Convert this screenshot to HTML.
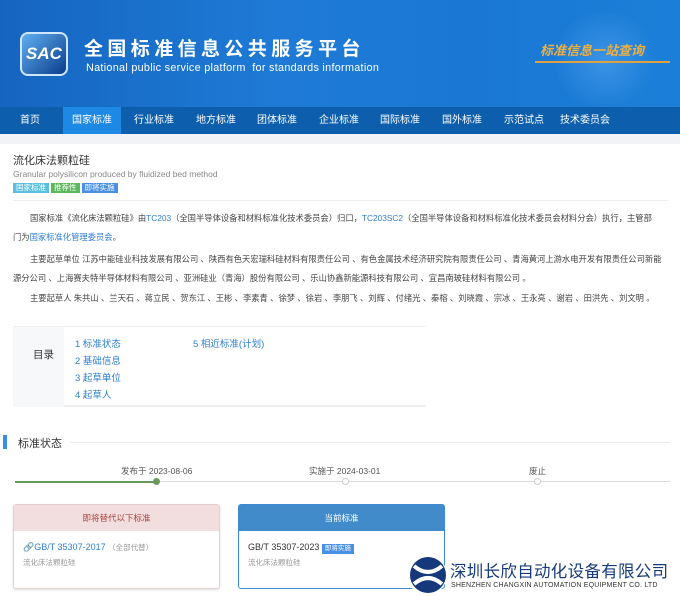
<!DOCTYPE html>
<html><head><meta charset="utf-8"><style>
*{margin:0;padding:0;box-sizing:border-box}
body{width:680px;height:596px;overflow:hidden;background:#fff;font-family:"Liberation Sans","Noto Sans CJK SC",sans-serif;font-size:9px;color:#333;position:relative}
.hd{position:absolute;left:0;top:0;width:680px;height:107px;background:linear-gradient(90deg,#1565c0 0%,#1e7ad6 40%,#1a78d4 70%,#1b7fd8 100%)}
.nav{position:absolute;left:0;top:107px;width:680px;height:27px;background:#0d5fae}
.nav span{position:absolute;top:0;height:27px;line-height:27px;color:#fff;font-size:10px}
.strip{position:absolute;left:0;top:134px;width:680px;height:10px;background:#f1f3f6}
.lk{color:#2f7fd0}
.l{position:absolute;white-space:nowrap;font-size:8.3px;color:#444;line-height:12px}
.bd{display:inline-block;color:#fff;font-size:7.5px;padding:0 3px;height:10px;line-height:10px;margin-right:2px}
</style></head><body>
<div class="hd">
 <div style="position:absolute;left:20px;top:32px;width:48px;height:44px;border-radius:8px;background:linear-gradient(135deg,#5fb0f0,#0a3c8c);border:2px solid #cfe6fb"></div>
 <div style="position:absolute;left:21px;top:44px;width:46px;color:#fff;font:italic bold 17px 'Liberation Sans',sans-serif;text-align:center">SAC</div>
 <div style="position:absolute;left:84px;top:34px;color:#fff;font-size:19px;letter-spacing:4.4px;font-weight:bold">全国标准信息公共服务平台</div>
 <div style="position:absolute;left:86px;top:62px;color:#fff;font-size:10.8px;letter-spacing:.3px">National public service platform&nbsp; for standards information</div>
 <div style="position:absolute;left:550px;top:12px;width:110px;height:95px;border-radius:50%;background:radial-gradient(circle,rgba(120,190,255,.35),rgba(30,120,210,0) 70%)"></div>
 <div style="position:absolute;left:540px;top:40px;color:#f0b040;font-size:13px;font-style:italic;font-weight:bold">标准信息一站查询</div>
 <div style="position:absolute;left:535px;top:61px;width:135px;height:2px;background:#e0a040"></div>
</div>
<div class="nav">
 <div style="position:absolute;left:63px;top:0;width:58px;height:27px;background:#1e88e5"></div>
 <span style="left:20px">首页</span><span style="left:72px">国家标准</span><span style="left:134px">行业标准</span><span style="left:196px">地方标准</span><span style="left:257px">团体标准</span><span style="left:319px">企业标准</span><span style="left:380px">国际标准</span><span style="left:442px">国外标准</span><span style="left:504px">示范试点</span><span style="left:560px">技术委员会</span>
</div>
<div class="strip"></div>
<div style="position:absolute;left:13px;top:152px;font-size:11px;color:#333">流化床法颗粒硅</div>
<div style="position:absolute;left:13px;top:169px;font-size:8.5px;color:#888">Granular polysilicon produced by fluidized bed method</div>
<div style="position:absolute;left:13px;top:182px"><span class="bd" style="background:#5bc0de">国家标准</span><span class="bd" style="background:#5cb85c">推荐性</span><span class="bd" style="background:#4a90e2">即将实施</span></div>
<div style="position:absolute;left:13px;top:200px;width:655px;height:1px;background:#eee"></div>
<div class="l" style="left:30px;top:212px">国家标准《流化床法颗粒硅》由<span class="lk">TC203</span>（全国半导体设备和材料标准化技术委员会）归口，<span class="lk">TC203SC2</span>（全国半导体设备和材料标准化技术委员会材料分会）执行，主管部</div>
<div class="l" style="left:13px;top:231px">门为<span class="lk">国家标准化管理委员会</span>。</div>
<div class="l" style="left:30px;top:253px">主要起草单位 江苏中能硅业科技发展有限公司 、陕西有色天宏瑞科硅材料有限责任公司 、有色金属技术经济研究院有限责任公司 、青海黄河上游水电开发有限责任公司新能</div>
<div class="l" style="left:13px;top:272px">源分公司 、上海赛夫特半导体材料有限公司 、亚洲硅业（青海）股份有限公司 、乐山协鑫新能源科技有限公司 、宜昌南玻硅材料有限公司 。</div>
<div class="l" style="left:30px;top:292px">主要起草人 朱共山 、兰天石 、蒋立民 、贺东江 、王彬 、李素青 、徐梦 、徐岩 、李朋飞 、刘辉 、付绪光 、秦榕 、刘晓霞 、宗冰 、王永亮 、谢岩 、田洪先 、刘文明 。</div>
<div style="position:absolute;left:13px;top:326px;width:413px;height:81px;border-top:1px solid #eee;border-bottom:2px solid #eee"></div>
<div style="position:absolute;left:13px;top:327px;width:51px;height:80px;background:#f7f8fa"></div>
<div style="position:absolute;left:33px;top:347px;font-size:10.5px">目录</div>
<div style="position:absolute;left:75px;top:336px;line-height:17px;font-size:9.5px;color:#2f7fd0">1 标准状态<br>2 基础信息<br>3 起草单位<br>4 起草人</div>
<div style="position:absolute;left:193px;top:336px;line-height:17px;font-size:9.5px;color:#2f7fd0">5 相近标准(计划)</div>
<div style="position:absolute;left:3px;top:435px;width:4px;height:14px;background:#3a8ee6"></div>
<div style="position:absolute;left:18px;top:435px;font-size:11px;color:#333">标准状态</div>
<div style="position:absolute;left:70px;top:442px;width:600px;height:1px;background:#eee"></div>
<div style="position:absolute;left:121px;top:465px;font-size:8.5px;color:#555">发布于 2023-08-06</div>
<div style="position:absolute;left:309px;top:465px;font-size:8.5px;color:#555">实施于 2024-03-01</div>
<div style="position:absolute;left:529px;top:465px;font-size:8.5px;color:#555">废止</div>
<div style="position:absolute;left:15px;top:481px;width:655px;height:1px;background:#ddd"></div>
<div style="position:absolute;left:15px;top:481px;width:142px;height:2px;background:#6a9a5a"></div>
<div style="position:absolute;left:153px;top:478px;width:7px;height:7px;border-radius:50%;background:#6a9a5a"></div>
<div style="position:absolute;left:342px;top:478px;width:7px;height:7px;border-radius:50%;background:#fff;border:1px solid #ccc"></div>
<div style="position:absolute;left:534px;top:478px;width:7px;height:7px;border-radius:50%;background:#fff;border:1px solid #ccc"></div>
<div style="position:absolute;left:13px;top:504px;width:207px;height:85px;border:1px solid #e8d0d0;border-radius:3px;box-shadow:0 1px 2px #ddd">
 <div style="height:26px;line-height:26px;background:#f2dede;color:#a94442;text-align:center;font-size:8.5px">即将替代以下标准</div>
 <div style="position:absolute;left:9px;top:37px;font-size:9px;color:#2f7fd0">🔗GB/T 35307-2017 <span style="color:#999;font-size:7.5px">（全部代替）</span></div>
 <div style="position:absolute;left:9px;top:52px;font-size:7.5px;color:#999">流化床法颗粒硅</div>
</div>
<div style="position:absolute;left:238px;top:504px;width:207px;height:85px;border:1px solid #3d8bd0;border-radius:3px">
 <div style="height:26px;line-height:26px;background:#428bca;color:#fff;text-align:center;font-size:8.5px">当前标准</div>
 <div style="position:absolute;left:9px;top:37px;font-size:9px;color:#333">GB/T 35307-2023 <span class="bd" style="background:#4a90e2;font-size:6.5px">即将实施</span></div>
 <div style="position:absolute;left:9px;top:52px;font-size:7.5px;color:#999">流化床法颗粒硅</div>
</div>
<div style="position:absolute;left:407px;top:555px;width:40px;height:40px;border-radius:50%;background:#fff"></div>
<svg style="position:absolute;left:409px;top:556px" width="38" height="38" viewBox="0 0 38 38"><circle cx="19" cy="19" r="18" fill="#14387a"/><path d="M5 10 Q19 22 33 10 M5 28 Q19 16 33 28" stroke="#fff" stroke-width="4" fill="none"/></svg>
<div style="position:absolute;left:450px;top:558px;font-size:16.5px;color:#173a7a;letter-spacing:.3px;background:rgba(255,255,255,.85)">深圳长欣自动化设备有限公司</div>
<div style="position:absolute;left:451px;top:582px;font-size:7px;color:#333;letter-spacing:.2px">SHENZHEN CHANGXIN AUTOMATION EQUIPMENT CO. LTD</div>
</body></html>
